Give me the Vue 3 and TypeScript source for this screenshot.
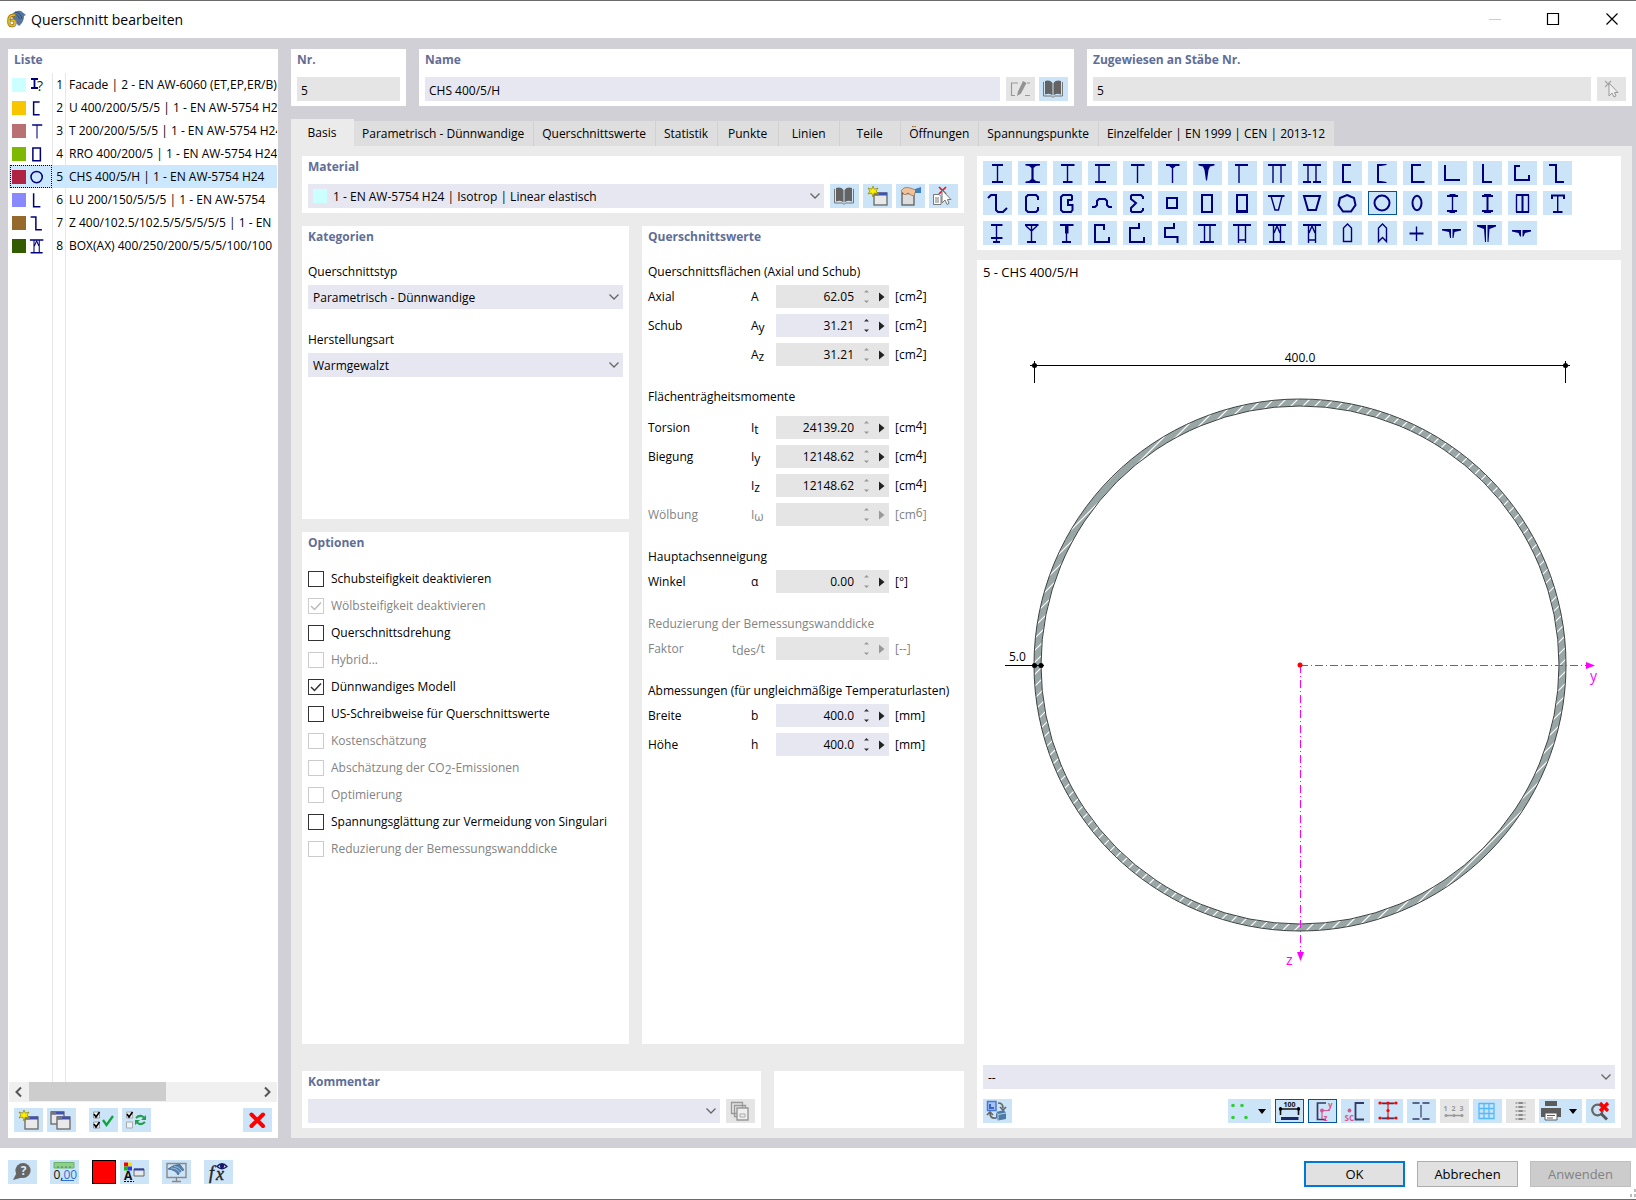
<script setup lang="ts">
import { ref } from 'vue'

interface Shape { name: string; d?: string; t?: string; f?: string }
interface Section { id: number; color: string; shape: number; label: string }
interface Option { label: string; sub?: string; tail?: string; on?: boolean; off?: boolean }
interface Value { name: string; sym: string; sub?: string; rest?: string; value: string; unit: string; pow?: string; edit?: boolean; off?: boolean }
interface Group { title: string; off?: boolean; roomy?: boolean; rows: Value[] }

// d: heavy strokes, t: light strokes, f: filled areas
const shapes: Shape[] = [
  { name: 'I', d: 'M9 4H20M9 21H20', t: 'M14.5 4V21' },
  { name: 'I konisch', t: 'M14.5 4V21', f: 'M7.5 3H22V4.5L18 5L15.500 7V18L18 20L22 20.500V22H7.500V20.500L11 20L13.500 18V7L11 5L7.500 4.500Z' },
  { name: 'I ungleich', d: 'M8 4H21.5M10 21H19.5', t: 'M14.5 4V21' },
  { name: 'I einseitig', d: 'M7 4H22M7 21H18', t: 'M11 4V21' },
  { name: 'T', d: 'M8 4H21.5', t: 'M14.5 4V22' },
  { name: 'T konisch', d: 'M8 4H21.5', t: 'M14.5 4V22', f: 'M10 4H19L15.5 7H13.5Z' },
  { name: 'T spitz', f: 'M5.5 3H21.5V4.5L17 5.500L15.500 9L14 19.500H13L11.500 9L10 5.500L5.500 4.500Z' },
  { name: 'T einseitig', d: 'M7 4H20', t: 'M11 4V22' },
  { name: 'TT', d: 'M5 4H23', t: 'M10 4V22M18 4V22' },
  { name: 'II', d: 'M5 4H23M5 21H13M15 21H23', t: 'M10 4V21M18 4V21' },
  { name: 'U', d: 'M18 4H10V21H18' },
  { name: 'U konisch', d: 'M10 3V22', f: 'M9 3H18.5V4L13 5H10ZM9 22H18.5V21L13 20H10Z' },
  { name: 'U ungleich', d: 'M18 4H9V21H21.5' },
  { name: 'L breit', d: 'M7 4V19H22' },
  { name: 'L', d: 'M10 3V21H19' },
  { name: 'L mit Lippen', d: 'M12 5H7V19H21V14' },
  { name: 'Z', d: 'M6 4H13V21H21' },
  { name: 'Z mit Lippen', d: 'M5 7L8 4H13V19L15 21H20L24 17' },
  { name: 'C', d: 'M20 9V6L18 4H10L8 6V19L10 21H18L20 19V16' },
  { name: 'C versteift', d: 'M19 9V5L18 4H10L8 6V19L10 21H18L19.500 19V14H15V9H19.500' },
  { name: 'Hut', d: 'M4 16H7L9 14V10L11 8H17L19 10V14L21 16H24' },
  { name: 'Sigma', d: 'M20 8V6L18 4H9L8 5V8L13 12L8 17V20L9 21H18L20 19V17' },
  { name: 'Quadratrohr', d: 'M9 7H19V17H9Z' },
  { name: 'Rechteckrohr', d: 'M9 4H19V21H9Z' },
  { name: 'Rechteckrohr verstärkt', d: 'M9 4H19V21H9Z', f: 'M8 19H20V22H8Z' },
  { name: 'Trapez offen', d: 'M5 5H21.500', t: 'M8 5L12 19H15.500L19 5' },
  { name: 'Trapez', d: 'M6 5H22L18 19H10Z' },
  { name: 'Polygon', d: 'M14 4L21 7L22.5 14L18 20.5H10L5.5 14L7 7Z' },
  { name: 'Kreisrohr', d: 'M6.500 12A7.500 7.500 0 1 0 21.500 12A7.500 7.500 0 1 0 6.500 12Z' },
  { name: 'Ellipse', d: 'M9.500 12A4.500 7.200 0 1 0 18.500 12A4.500 7.200 0 1 0 9.500 12Z' },
  { name: 'I mit Kappe', d: 'M9 5H20M9 20H19', t: 'M14.500 5V20', f: 'M11.500 3H17.500V5H11.500ZM11.500 20H17V22H11.500Z' },
  { name: 'I mit Kappen', d: 'M9 5H20M9 20H20M14.500 5V20', f: 'M11 3H18V5H11ZM11 20H18V22H11Z' },
  { name: 'Kasten mit Steg', d: 'M8 4H21M8 21H21M14.500 4V21', t: 'M8.500 4V21M20.500 4V21' },
  { name: 'T mit Lippen', d: 'M9 8V4.500H21V8M10 21H19.500', t: 'M14.700 4V21' },
  { name: 'I mit Zusatz', d: 'M8 4H19.500M8 17H19.500M10 21H17', t: 'M13.500 4V21' },
  { name: 'I mit Streben', d: 'M7 4H20.500M9 21H18', t: 'M13.500 4V21M8 5L13.500 10L19 5' },
  { name: 'I verstärkt', d: 'M7 4H20.500M9 21H18', t: 'M13.500 4V21', f: 'M12 4H15.500V12.500H12Z' },
  { name: 'U mit Lippen', d: 'M16 9V4H7V21H21V16' },
  { name: 'U abgestuft', d: 'M16 2V7H7V21H21V16' },
  { name: 'S', d: 'M16 2V7H7V16H19.500V22' },
  { name: 'Doppelsteg', d: 'M5 4H23M7 21H21', t: 'M11.500 4V21M17 4V21' },
  { name: 'Doppelsteg offen', d: 'M5 4H23', t: 'M10.500 4V22M17.500 4V22M10.500 19H17.500' },
  { name: 'BOX(AX)', d: 'M5 4H23M6 21H22', t: 'M10.500 4V21M17.500 4V21M11 12L14 5L17 12' },
  { name: 'BOX offen', d: 'M5 4H23', t: 'M10.500 4V22M17.500 4V22M11 12L14 5L17 12M10.500 19H17.500' },
  { name: 'Spitzbogen', t: 'M10.500 20.500V7L14.500 3L18.500 7V20.500Z' },
  { name: 'Spitzbogen gekerbt', t: 'M10.500 20.500V7L14.500 3L18.500 7V20.500L14.500 16.500Z' },
  { name: 'Kreuz', d: 'M6.500 12.500H20.500', t: 'M13.500 5.500V20' },
  { name: 'Doppelwinkel', f: 'M4 8H13V17H12L11 11L4 9.500ZM14.500 8H23V9.500L16.500 11L15.500 17H14.500Z' },
  { name: 'Doppelwinkel lang', f: 'M4 4H13V21H12L11 8L4 5.500ZM14.500 4H23V5.500L16.500 8L15.500 21H14.500Z' },
  { name: 'Doppelwinkel kurz', f: 'M4 9H13V15.500H12L10.500 12L4 10.500ZM14.500 9H23V10.500L17 12L15.500 15.500H14.500Z' },
]
const shapeRows: Shape[][] = [shapes.slice(0, 17), shapes.slice(17, 34), shapes.slice(34)]

const sections: Section[] = [
  { id: 1, color: '#ccffff', shape: -1, label: 'Facade | 2 - EN AW-6060 (ET,EP,ER/B)' },
  { id: 2, color: '#f7c600', shape: 10, label: 'U 400/200/5/5/5 | 1 - EN AW-5754 H24' },
  { id: 3, color: '#b97073', shape: 4, label: 'T 200/200/5/5/5 | 1 - EN AW-5754 H24' },
  { id: 4, color: '#7cb900', shape: 23, label: 'RRO 400/200/5 | 1 - EN AW-5754 H24' },
  { id: 5, color: '#b02342', shape: 28, label: 'CHS 400/5/H | 1 - EN AW-5754 H24' },
  { id: 6, color: '#8888ff', shape: 14, label: 'LU 200/150/5/5/5 | 1 - EN AW-5754' },
  { id: 7, color: '#95682b', shape: 16, label: 'Z 400/102.5/102.5/5/5/5/5/5 | 1 - EN' },
  { id: 8, color: '#335c00', shape: 42, label: 'BOX(AX) 400/250/200/5/5/5/100/100' },
]
const current = ref(5)

const tabs = ['Basis', 'Parametrisch - Dünnwandige', 'Querschnittswerte', 'Statistik', 'Punkte', 'Linien', 'Teile', 'Öffnungen', 'Spannungspunkte', 'Einzelfelder | EN 1999 | CEN | 2013-12']
const activeTab = ref(0)

const options = ref<Option[]>([
  { label: 'Schubsteifigkeit deaktivieren' },
  { label: 'Wölbsteifigkeit deaktivieren', on: true, off: true },
  { label: 'Querschnittsdrehung' },
  { label: 'Hybrid...', off: true },
  { label: 'Dünnwandiges Modell', on: true },
  { label: 'US-Schreibweise für Querschnittswerte' },
  { label: 'Kostenschätzung', off: true },
  { label: 'Abschätzung der CO', sub: '2', tail: '-Emissionen', off: true },
  { label: 'Optimierung', off: true },
  { label: 'Spannungsglättung zur Vermeidung von Singularitäten' },
  { label: 'Reduzierung der Bemessungswanddicke', off: true },
])

const groups: Group[] = [
  { title: 'Querschnittsflächen (Axial und Schub)', rows: [
    { name: 'Axial', sym: 'A', value: '62.05', unit: 'cm', pow: '2' },
    { name: 'Schub', sym: 'A', sub: 'y', value: '31.21', unit: 'cm', pow: '2', edit: true },
    { name: '', sym: 'A', sub: 'z', value: '31.21', unit: 'cm', pow: '2' },
  ] },
  { title: 'Flächenträgheitsmomente', roomy: true, rows: [
    { name: 'Torsion', sym: 'I', sub: 't', value: '24139.20', unit: 'cm', pow: '4' },
    { name: 'Biegung', sym: 'I', sub: 'y', value: '12148.62', unit: 'cm', pow: '4' },
    { name: '', sym: 'I', sub: 'z', value: '12148.62', unit: 'cm', pow: '4' },
    { name: 'Wölbung', sym: 'I', sub: 'ω', value: '', unit: 'cm', pow: '6', off: true },
  ] },
  { title: 'Hauptachsenneigung', rows: [{ name: 'Winkel', sym: 'α', value: '0.00', unit: '°' }] },
  { title: 'Reduzierung der Bemessungswanddicke', off: true, rows: [{ name: 'Faktor', sym: 't', sub: 'des', rest: '/t', value: '', unit: '--', off: true }] },
  { title: 'Abmessungen (für ungleichmäßige Temperaturlasten)', rows: [
    { name: 'Breite', sym: 'b', value: '400.0', unit: 'mm', edit: true },
    { name: 'Höhe', sym: 'h', value: '400.0', unit: 'mm', edit: true },
  ] },
]

const win = (x: number, y: number): string =>
  `<rect x="${x}" y="${y}" width="13" height="12" fill="#e9e9ea" stroke="#6e6e6e" stroke-width="1.400"/><path d="M${x} ${y + 1}h13" stroke="#3f51b5" stroke-width="3"/><path d="M${x} ${y + 1}h5" stroke="#777" stroke-width="3"/>`
const star = '<path d="M10 2l1.300 3.200L15 4l-2 3 2 3-3.700-1L10 13l-1.300-4L5 10l2-3-2-3 3.700 1.200z" fill="#ffee00" stroke="#8a7d00" stroke-width=".7"/>'
const icons: Record<string, string> = {
  book: '<path d="M4.500 5V19H12.500L14 20.500L15.500 19H23.500V5" fill="none" stroke="#777" stroke-width="1"/><path d="M6 4Q11 2.500 13.500 6V18.500Q11 15.500 6 17.500Z" fill="#636363"/><path d="M22 4Q17 2.500 14.500 6V18.500Q17 15.500 22 17.500Z" fill="#636363"/>',
  edit: '<path d="M12 6H5.500V18.500H9M19 18.500H24M21 6H24" fill="none" stroke="#999" stroke-width="1.200"/><path d="M11 19L12 14.500L17 4L20.500 6L15 16.500Z" fill="#929292"/>',
  pick: '<path d="M8 4L14 10M14 4L8 10" stroke="#aaa" stroke-width="1.400"/><path d="M12 6V19L15 16L17 20L19 19L17.500 15.500H21Z" fill="#f0f0f0" stroke="#999"/>',
  new: win(11, 9) + star,
  hand: '<path d="M6 9H18V21H6Z" fill="#ddd" stroke="#6e6e6e" stroke-width="1.500"/><path d="M6 9H18" stroke="#555" stroke-width="2.500"/><path d="M5 7Q8 2 14 4L20 6L18 12Q14 11 12 9Q8 12 7 9Z" fill="#efc39a" stroke="#9c7450" stroke-width=".8"/><path d="M19 5L25 3V9L19 9Z" fill="#3f7fc0"/>',
  unpick: '<path d="M10 3L17 10M17 3L10 10" stroke="#ee1122" stroke-width="1.700"/><path d="M4.500 10.500H10L12 12.500V20.500H4.500Z" fill="#fff" stroke="#777"/><path d="M6 14H10M6 16H10M6 18H10" stroke="#777"/><path d="M13 6V19L16 16L18 20.500L20 19.500L18.500 15.500H22Z" fill="#fff" stroke="#777"/>',
  copy: win(4, 4) + win(10, 9),
  checkAll: '<path d="M4.500 4H10.500V10H4.500ZM4.500 14H10.500V20H4.500Z" fill="#fff" stroke="#999"/><path d="M5 6L7 9L10.500 4M5 16L7 19L10.500 14" fill="none" stroke="#000" stroke-width="1.600"/><path d="M14 12L17.500 17L24 8" fill="none" stroke="#12a33e" stroke-width="2.300"/>',
  checkSwap: '<path d="M4.500 4H10.500V10H4.500ZM4.500 14H10.500V20H4.500Z" fill="#fff" fill-opacity=".6" stroke="#aaa"/><path d="M5 6L7 9L10.500 4" fill="none" stroke="#000" stroke-width="1.600"/><path d="M14 10Q18 6 22 9.500M23 14Q19 18 15 14.500" fill="none" stroke="#20a050" stroke-width="2"/><path d="M24 7V12H19ZM13 17V12H18Z" fill="#20a050"/>',
  remove: '<path d="M8.500 6.500L20 18M20 6.500L8.500 18" stroke="#ff0000" stroke-width="4" stroke-linecap="round"/>',
  help: '<circle cx="15" cy="10.500" r="7.600" fill="#666"/><path d="M9 12L5 20L14 17.500Z" fill="#666"/><text x="15.500" y="15" text-anchor="middle" font-size="12" font-weight="700" fill="#dcebf8">?</text>',
  units: '<path d="M4 2.500H24V8H4Z" fill="#8ed08a" stroke="#6bb068"/><path d="M8 6V8M12 6V8M16 6V8M20 6V8" stroke="#4b8a4b"/><text x="3.500" y="18.500" font-size="12" fill="#111">0,<tspan fill="#2f6fd0">00</tspan></text><path d="M12 20.500H24" stroke="#2f6fd0"/>',
  colors: '<path d="M4 2.500H8V6.500H4Z" fill="#f00"/><path d="M8 2.500H12V6.500H8Z" fill="#fd0"/><path d="M4 6.500H8V10.500H4Z" fill="#1b1"/><path d="M8 6.500H12V10.500H8Z" fill="#33f"/><text x="4" y="20" font-size="12" font-weight="700" fill="#111">A</text><path d="M4 21.500H14" stroke="#111" stroke-dasharray="2 1"/><path d="M14 9H24V16H14Z" fill="#e8e8e8" stroke="#666"/><path d="M14 9.500H24" stroke="#2a3fb0" stroke-width="2"/>',
  view: '<path d="M5 3.500H24V17.500H5ZM14.500 17.500V21M10 21.500H19" fill="none" stroke="#888" stroke-width="1.400"/><path d="M6 9Q12 4 18 4.500L22 10L19 11L16 15Q14 10 6 9Z" fill="#5681ad" stroke="#33557a" stroke-width=".6"/><path d="M9 8Q15 8 18 13M12 6Q17 7 20 11" fill="none" stroke="#bcd4ea" stroke-width=".7"/>',
  fx: '<text x="5" y="19" font-size="18" font-style="italic" font-family="Liberation Serif" fill="#222" stroke="#222" stroke-width=".4">f</text><text x="12" y="20" font-size="18" font-style="italic" font-family="Liberation Serif" fill="#222" stroke="#222" stroke-width=".4">x</text><path d="M13 6.500Q18 1 23 6.500Q18 11 13 6.500Z" fill="#dfe9f8" stroke="#15156a" stroke-width="1.300"/><circle cx="18" cy="6" r="2.200" fill="#15156a"/>',
  layers: '<path d="M5.500 3.500H16.500V14.500H5.500ZM8.500 6.500H19.500V17.500H8.500Z" fill="none" stroke="#999" stroke-width="1.300"/><path d="M11 9H22V21H11Z" fill="#eee" stroke="#999" stroke-width="1.400"/><path d="M14 15H19V18H14Z" fill="none" stroke="#aaa"/>',
  convert: '<path d="M4.500 2.500H13V11.500H4.500Z" fill="#a9c2f4" stroke="#4a78d8" stroke-width="1.500"/><path d="M7 5V9H11" fill="none" stroke="#3a62c8" stroke-width="2"/><path d="M15 4Q20 4 20 9M17 8L20 11L23 8M13 19Q7 20 7 14M4 16L7 13L10 16" fill="none" stroke="#666" stroke-width="1.700"/><path d="M13 13L21 11L23 14V20L15 21.500L13 19Z" fill="#4c7ba8"/><path d="M13 13L15 15.500V21.500M15 15.500L23 14" stroke="#b8d2ea" fill="none"/>',
  points: '<g fill="#2fd02f"><circle cx="5" cy="6.500" r="1.800"/><circle cx="14" cy="6.500" r="1.800"/><circle cx="5" cy="18.500" r="1.800"/><circle cx="18" cy="18.500" r="1.800"/></g><path d="M30 10H38L34 15Z" fill="#000"/>',
  dims: '<text x="14.500" y="8" text-anchor="middle" font-size="7" font-weight="700" fill="#111">100</text><path d="M5.500 10H23.500M5.500 8V16M23.500 8V16" stroke="#111" stroke-width="1.600"/><circle cx="5.500" cy="10" r="1.700"/><circle cx="23.500" cy="10" r="1.700"/><path d="M6 19.500H23.500" stroke="#1b2a66" stroke-width="3"/>',
  axes: '<path d="M18 4H9.500V20.500H18" fill="none" stroke="#333a66" stroke-width="1.700"/><path d="M14 11.500H22M14 11.500V20" stroke="#d9558f" stroke-width="1.200"/><circle cx="14" cy="11.500" r="2" fill="#d9558f"/><text x="20" y="9" font-size="8" font-weight="700" fill="#d9558f">y</text><text x="15.500" y="22" font-size="8" font-weight="700" fill="#d9558f">z</text>',
  shear: '<path d="M23 4H14.500V20.500H23" fill="none" stroke="#333a66" stroke-width="1.800"/><circle cx="8.500" cy="11.500" r="1.900" fill="#d9558f"/><text x="3.500" y="22" font-size="8" font-weight="700" fill="#d9558f">SC</text>',
  nodes: '<path d="M6 4H22M6 19H22M14 4V19" stroke="#d22" stroke-width="1.200"/><path d="M8 4.500H20M8 19.500H20" stroke="#333a66" stroke-width="1.500"/><g fill="#f00"><circle cx="6" cy="4" r="1.600"/><circle cx="14" cy="4" r="1.600"/><circle cx="22" cy="4" r="1.600"/><circle cx="14" cy="11.500" r="1.600"/><circle cx="6" cy="19" r="1.600"/><circle cx="14" cy="19" r="1.600"/><circle cx="22" cy="19" r="1.600"/></g>',
  lines: '<path d="M5.500 4H12.500M15.500 4H22.500M5.500 20H12.500M15.500 20H22.500" stroke="#333a66" stroke-width="1.700"/><path d="M14 6V18.500" stroke="#556088" stroke-width="1.500"/>',
  numbers: '<text x="3.500" y="12" font-size="7" font-weight="700" fill="#999">1</text><text x="11.500" y="12" font-size="7" font-weight="700" fill="#999">2</text><text x="19.500" y="12" font-size="7" font-weight="700" fill="#999">3</text><path d="M6 16.500H22" stroke="#999" stroke-width="1.500"/><circle cx="6" cy="16.500" r="1.500" fill="#999"/><circle cx="14" cy="16.500" r="1.500" fill="#999"/><circle cx="22" cy="16.500" r="1.500" fill="#999"/>',
  grid: '<path d="M6 4.500H21V19.500H6ZM6 9.500H21M6 14.500H21M11 4.500V19.500M16 4.500V19.500" fill="none" stroke="#51b9ff" stroke-width="1.300"/>',
  mesh: '<path d="M9.500 4H19.500M9.500 8H19.500M9.500 12H19.500M9.500 16H19.500M9.500 20H19.500" stroke="#aaa" stroke-width="2" stroke-dasharray="2 1"/><path d="M14.500 3V21" stroke="#888" stroke-width="4" stroke-dasharray="2 2"/>',
  print: '<path d="M6 2H18V7H6Z" fill="#5c5c5c"/><path d="M2 9H22V18H2Z" fill="#5c5c5c"/><path d="M6 14H18V21H6Z" fill="#fff" stroke="#5c5c5c"/><path d="M8 16.500H16M8 19H14" stroke="#5c5c5c"/><path d="M30 10H38L34 15Z" fill="#000"/>',
  zoomOff: '<circle cx="11.500" cy="11" r="5.300" fill="none" stroke="#666" stroke-width="2.200"/><path d="M15 14.500L21 20.500" stroke="#555" stroke-width="3"/><path d="M14 4L22 12M22 4L14 12" stroke="#f00" stroke-width="3.200"/>',
}

const listTools = [
  { icon: 'new', title: 'Neu' }, { icon: 'copy', title: 'Kopieren' },
  { icon: 'checkAll', title: 'Alle auswählen', gap: true }, { icon: 'checkSwap', title: 'Auswahl umkehren' },
]
const viewTools = [
  { icon: 'points', wide: true }, { icon: 'dims', active: true }, { icon: 'axes', active: true }, { icon: 'shear' },
  { icon: 'nodes' }, { icon: 'lines' }, { icon: 'numbers', off: true }, { icon: 'grid' }, { icon: 'mesh', off: true },
  { icon: 'print', wide: true }, { icon: 'zoomOff' },
]
const hatch = Array.from({ length: 120 }, (_, i) => `M${-560 + i * 12} 780l780 -780`).join('')
</script>

<template>
  <div class="window">
    <header class="titlebar">
      <svg class="logo" viewBox="0 0 20 20" aria-hidden="true">
        <path d="M5 5Q10 0 15 1L20 5L18 6Q18 12 13 16L9 12Z" fill="#56789f" />
        <path d="M6 5Q11 3 14 9M9 2Q15 3 16 9" fill="none" stroke="#2f4c70" />
        <text x="1" y="17" font-size="17" font-weight="700" fill="#f2c31c" stroke="#8b6d10" stroke-width="0.700">6</text>
      </svg>
      <h1>Querschnitt bearbeiten</h1>
      <div class="controls">
        <button type="button" aria-label="Minimieren" disabled><svg viewBox="0 0 14 14"><path d="M1 7.500H13" stroke="#ccc" /></svg></button>
        <button type="button" aria-label="Maximieren"><svg viewBox="0 0 14 14"><path d="M1.500 1.500H12.500V12.500H1.500Z" fill="none" stroke="#000" stroke-width="1.200" /></svg></button>
        <button type="button" aria-label="Schließen"><svg viewBox="0 0 14 14"><path d="M1.500 1.500L12.500 12.500M12.500 1.500L1.500 12.500" stroke="#000" stroke-width="1.200" /></svg></button>
      </div>
    </header>

    <main class="body">
      <aside class="list">
        <h2>Liste</h2>
        <div class="rows">
          <table>
            <colgroup><col class="c-icon"><col class="c-no"><col></colgroup>
            <tbody>
              <tr v-for="s in sections" :key="s.id" :class="{ selected: s.id === current }" @click="current = s.id">
                <td class="mark">
                  <div>
                    <i class="swatch" :style="{ background: s.color }"></i>
                    <svg v-if="s.shape < 0" class="mini" viewBox="0 0 22 18">
                      <path d="M5 3H12M5 12H12M8.500 3V12" stroke="#00007d" stroke-width="1.800" />
                      <text x="11" y="15" font-size="14" fill="#222">?</text>
                    </svg>
                    <svg v-else class="mini shape" viewBox="0 0 29 24">
                      <path class="d" :d="shapes[s.shape].d" /><path class="t" :d="shapes[s.shape].t" />
                    </svg>
                  </div>
                </td>
                <td class="no">{{ s.id }}</td>
                <td class="label">{{ s.label }}</td>
              </tr>
            </tbody>
          </table>
        </div>
        <div class="scroll">
          <button type="button" aria-label="Nach links"><svg viewBox="0 0 20 20"><path d="M12 5.500L7.500 10L12 14.500" /></svg></button>
          <div class="track"><div class="thumb"></div></div>
          <button type="button" aria-label="Nach rechts"><svg viewBox="0 0 20 20"><path d="M8 5.500L12.500 10L8 14.500" /></svg></button>
        </div>
        <div class="tools">
          <button v-for="t in listTools" :key="t.icon" type="button" class="ib" :class="{ apart: t.gap }" :aria-label="t.title"><svg viewBox="0 0 29 24" v-html="icons[t.icon]"></svg></button>
          <button type="button" class="ib last" aria-label="Löschen"><svg viewBox="0 0 29 24" v-html="icons.remove"></svg></button>
        </div>
      </aside>

      <div class="content">
        <div class="top">
          <section class="panel">
            <h2><label for="nr">Nr.</label></h2>
            <input id="nr" class="field ro" value="5" readonly>
          </section>
          <section class="panel">
            <h2><label for="name">Name</label></h2>
            <div class="line">
              <input id="name" class="field" value="CHS 400/5/H">
              <button type="button" class="ib off first" disabled aria-label="Name bearbeiten"><svg viewBox="0 0 29 24" v-html="icons.edit"></svg></button>
              <button type="button" class="ib" aria-label="Bibliothek"><svg viewBox="0 0 29 24" v-html="icons.book"></svg></button>
            </div>
          </section>
          <section class="panel">
            <h2><label for="assigned">Zugewiesen an Stäbe Nr.</label></h2>
            <div class="line">
              <input id="assigned" class="field ro" value="5" readonly>
              <button type="button" class="ib off first" disabled aria-label="Stäbe wählen"><svg viewBox="0 0 29 24" v-html="icons.pick"></svg></button>
            </div>
          </section>
        </div>

        <nav class="tabs" role="tablist">
          <button v-for="(t, i) in tabs" :key="t" type="button" role="tab" :aria-selected="i === activeTab" :class="{ active: i === activeTab }" @click="activeTab = i">{{ t }}</button>
        </nav>

        <div class="page">
          <div class="left">
            <section class="panel">
              <h2><label for="material">Material</label></h2>
              <div class="line">
                <div class="combo material">
                  <i class="swatch cyan"></i>
                  <select id="material"><option>1 - EN AW-5754 H24 | Isotrop | Linear elastisch</option></select>
                  <svg class="chev" viewBox="0 0 12 8"><path d="M1.500 1.500L6 6L10.500 1.500" /></svg>
                </div>
                <button type="button" class="ib first" aria-label="Bibliothek"><svg viewBox="0 0 29 24" v-html="icons.book"></svg></button>
                <button type="button" class="ib" aria-label="Neu"><svg viewBox="0 0 29 24" v-html="icons.new"></svg></button>
                <button type="button" class="ib" aria-label="Bearbeiten"><svg viewBox="0 0 29 24" v-html="icons.hand"></svg></button>
                <button type="button" class="ib" aria-label="Auswahl"><svg viewBox="0 0 29 24" v-html="icons.unpick"></svg></button>
              </div>
            </section>

            <div class="middle">
              <div class="stack">
                <section class="panel categories">
                  <h2>Kategorien</h2>
                  <label class="caption" for="type">Querschnittstyp</label>
                  <div class="combo">
                    <select id="type"><option>Parametrisch - Dünnwandige</option></select>
                    <svg class="chev" viewBox="0 0 12 8"><path d="M1.500 1.500L6 6L10.500 1.500" /></svg>
                  </div>
                  <label class="caption second" for="make">Herstellungsart</label>
                  <div class="combo">
                    <select id="make"><option>Warmgewalzt</option></select>
                    <svg class="chev" viewBox="0 0 12 8"><path d="M1.500 1.500L6 6L10.500 1.500" /></svg>
                  </div>
                </section>
                <section class="panel options">
                  <h2>Optionen</h2>
                  <ul>
                    <li v-for="o in options" :key="o.label">
                      <label :class="{ dim: o.off }">
                        <input v-model="o.on" type="checkbox" :disabled="o.off">
                        <svg v-if="o.on" class="tick" viewBox="0 0 16 16"><path d="M3 8L6.500 11.500L13 4.500" /></svg>
                        <span>{{ o.label }}<span v-if="o.sub" class="sub">{{ o.sub }}</span>{{ o.tail }}</span>
                      </label>
                    </li>
                  </ul>
                </section>
              </div>

              <section class="panel values">
                <h2>Querschnittswerte</h2>
                <div v-for="(g, gi) in groups" :key="g.title" class="group" :class="{ roomy: g.roomy }">
                  <h3 :class="{ dim: g.off }">{{ g.title }}</h3>
                  <div v-for="(r, ri) in g.rows" :key="ri" class="row" :class="{ dim: r.off }">
                    <label :for="`v${gi}-${ri}`"><span class="rn">{{ r.name }}</span><span class="sym" :class="{ long: r.rest }">{{ r.sym }}<span v-if="r.sub" class="sub">{{ r.sub }}</span>{{ r.rest }}</span></label>
                    <div class="num" :class="{ edit: r.edit }">
                      <input :id="`v${gi}-${ri}`" type="text" :value="r.value" :readonly="!r.edit" :disabled="r.off">
                      <button type="button" class="spin" aria-label="Wert ändern" :disabled="!r.edit"><svg viewBox="0 0 9 17"><path d="M2 4.500L4.500 2L7 4.500ZM2 12.500L4.500 15L7 12.500Z" /></svg></button>
                      <button type="button" class="more" aria-label="Weitere Werte" :disabled="r.off"><svg viewBox="0 0 7 10"><path d="M1 0.500L6.500 5L1 9.500Z" /></svg></button>
                    </div>
                    <span class="unit">[{{ r.unit }}<span v-if="r.pow" class="sup">{{ r.pow }}</span>]</span>
                  </div>
                </div>
              </section>
            </div>

            <div class="bottom">
              <section class="panel">
                <h2><label for="comment">Kommentar</label></h2>
                <div class="line">
                  <div class="combo">
                    <select id="comment"><option></option></select>
                    <svg class="chev" viewBox="0 0 12 8"><path d="M1.500 1.500L6 6L10.500 1.500" /></svg>
                  </div>
                  <button type="button" class="ib off first" disabled aria-label="Kommentare"><svg viewBox="0 0 29 24" v-html="icons.layers"></svg></button>
                </div>
              </section>
              <section class="panel"></section>
            </div>
          </div>

          <div class="right">
            <section class="palette">
              <div v-for="(row, ri) in shapeRows" :key="ri" class="prow">
                <button v-for="s in row" :key="s.name" type="button" class="ib" :class="{ active: s.name === 'Kreisrohr' }" :aria-label="s.name">
                  <svg class="shape" viewBox="0 0 29 24"><path class="d" :d="s.d" /><path class="t" :d="s.t" /><path class="f" :d="s.f" /></svg>
                </button>
              </div>
            </section>

            <section class="preview">
              <h3>5 - CHS 400/5/H</h3>
              <div class="canvas">
                <svg viewBox="0 0 644 774" role="img" aria-label="Kreisrohr 400 × 5 mm">
                  <defs>
                    <clipPath id="wall"><path clip-rule="evenodd" d="M57 381a266 266 0 1 0 532 0a266 266 0 1 0 -532 0ZM64 381a259 259 0 1 0 518 0a259 259 0 1 0 -518 0Z" /></clipPath>
                  </defs>
                  <circle cx="323" cy="381" r="262.500" fill="none" stroke="#98a6a5" stroke-width="7" />
                  <path :d="hatch" clip-path="url(#wall)" stroke="#fff" stroke-width="1.200" />
                  <g fill="none" stroke="#3e4242" stroke-width="1"><circle cx="323" cy="381" r="266" /><circle cx="323" cy="381" r="259" /></g>
                  <path d="M53 81.500H593M57.500 77V99M588.500 77V99M28 381.500H67" stroke="#000" />
                  <circle cx="57.500" cy="81.500" r="2.500" /><circle cx="588.500" cy="81.500" r="2.500" />
                  <circle cx="57.500" cy="381.500" r="2.500" /><circle cx="64" cy="381.500" r="2.500" />
                  <text x="323" y="78" text-anchor="middle">400.0</text>
                  <text x="32" y="377">5.0</text>
                  <g stroke="#ff00ff" stroke-dasharray="8 3 1 3"><path d="M323 381.500H610" /><path d="M323.500 381V669" /></g>
                  <path d="M609 378V385L618 381.500ZM320 668H327L323.500 677Z" fill="#ff00ff" />
                  <circle cx="323" cy="381" r="2.500" fill="#ff0000" />
                  <text class="axis" x="613" y="397">y</text>
                  <text class="axis" x="309" y="681">z</text>
                </svg>
              </div>
              <div class="combo">
                <select aria-label="Darstellung"><option>--</option></select>
                <svg class="chev" viewBox="0 0 12 8"><path d="M1.500 1.500L6 6L10.500 1.500" /></svg>
              </div>
              <div class="tools view">
                <button type="button" class="ib" aria-label="Exportieren"><svg viewBox="0 0 29 24" v-html="icons.convert"></svg></button>
                <span class="grow"></span>
                <button v-for="t in viewTools" :key="t.icon" type="button" class="ib" :class="{ wide: t.wide, active: t.active, off: t.off }" :disabled="t.off" :aria-label="t.icon"><svg :viewBox="t.wide ? '0 0 43 24' : '0 0 29 24'" v-html="icons[t.icon]"></svg></button>
              </div>
            </section>
          </div>
        </div>
      </div>
    </main>

    <footer class="footer">
      <button type="button" class="ib" aria-label="Hilfe"><svg viewBox="0 0 29 24" v-html="icons.help"></svg></button>
      <button type="button" class="ib" aria-label="Einheiten"><svg viewBox="0 0 29 24" v-html="icons.units"></svg></button>
      <div class="pair">
        <button type="button" class="color" aria-label="Farbe"></button>
        <button type="button" class="ib" aria-label="Farben bearbeiten"><svg viewBox="0 0 29 24" v-html="icons.colors"></svg></button>
      </div>
      <button type="button" class="ib" aria-label="Ansicht"><svg viewBox="0 0 29 24" v-html="icons.view"></svg></button>
      <button type="button" class="ib" aria-label="Formel"><svg viewBox="0 0 29 24" v-html="icons.fx"></svg></button>
      <span class="grow"></span>
      <div class="actions">
        <button type="button" class="ok">OK</button>
        <button type="button">Abbrechen</button>
        <button type="button" disabled>Anwenden</button>
      </div>
      <svg class="grip" viewBox="0 0 6 8" aria-hidden="true"><path d="M4 0H6V3H4ZM0 5H2V8H0ZM4 5H6V8H4Z" /></svg>
    </footer>
  </div>
</template>

<style>
body { margin: 0; }
</style>

<style scoped>
.window { min-height: 100vh; display: flex; flex-direction: column; box-sizing: border-box; border-top: 1px solid #6b6b6b; border-bottom: 1px solid #6b6b6b; background: #fff; color: #000; font: 12px/18px "Open Sans", "Noto Sans", sans-serif; }
.window *, .window *::before { box-sizing: border-box; }
button, input, select { font: inherit; color: inherit; border: 0; border-radius: 0; margin: 0; padding: 0; background: none; outline: none; appearance: none; min-width: 0; }
select, input { opacity: 1; }
h1, h2, h3, ul { margin: 0; padding: 0; font: inherit; list-style: none; }
h2 { height: 20px; line-height: 20px; font-weight: 700; color: #5f6e97; margin-bottom: 7px; }
svg { display: block; }

.titlebar { height: 37px; display: flex; align-items: center; padding-left: 6px; }
.logo { width: 20px; height: 20px; margin-right: 5px; }
.titlebar h1 { font-size: 14px; line-height: 20px; flex: 1; }
.controls { display: flex; height: 100%; }
.controls button { width: 58px; height: 36px; display: grid; place-items: center; }
.controls button:last-child { width: 48px; margin-left: 6px; }
.controls svg { width: 14px; height: 14px; }

.body { flex: 1; display: flex; gap: 13px; padding: 11px 4px 10px 8px; background: #d1d0d6; }
.list { width: 270px; flex: none; background: #fff; padding: 1px; display: flex; flex-direction: column; }
.list h2 { padding-left: 5px; margin-bottom: 3px; }
.rows { flex: 1; background: linear-gradient(#e8e8ea, #e8e8ea) 43px 0 / 1px 100% no-repeat, linear-gradient(#e8e8ea, #e8e8ea) 56px 0 / 1px 100% no-repeat; }
table { width: 100%; table-layout: fixed; border-collapse: collapse; }
.c-icon { width: 44px; }
.c-no { width: 13px; }
td { height: 23px; padding: 0; white-space: nowrap; overflow: hidden; }
.no { text-align: right; padding-right: 3px; }
.label { padding-left: 3px; }
.selected td { background: #cce8ff; }
.mark div { height: 23px; display: flex; align-items: center; padding-left: 2px; width: 42px; margin-left: 1px; }
.selected .mark div { border: 1px dotted #000; padding-left: 1px; }
.swatch { width: 14px; height: 14px; flex: none; }
.mini { width: 22px; height: 18px; flex: none; }
.shape .d, .shape .t { fill: none; stroke: #00007d; stroke-width: 2; }
.shape .t { stroke-width: 1.4; }
.shape .f { fill: #00007d; }
.scroll { display: flex; height: 20px; background: #f0f0f0; }
.scroll button { width: 20px; }
.scroll path { fill: none; stroke: #555; stroke-width: 2; }
.track { flex: 1; height: 20px; }
.thumb { width: 60%; height: 19px; background: #cdcdcd; }
.tools { display: flex; gap: 4px; padding: 6px 5px 5px; }
.tools .apart { margin-left: 9px; }
.tools .last { margin-left: auto; }

.ib { width: 29px; height: 24px; flex: none; background: #cce4f7; }
.ib svg { width: 100%; height: 24px; }
.ib.off { background: #e5e5e5; }
.ib.active { box-shadow: inset 0 0 0 1px #00559b; }
.ib.wide { width: 43px; }

.content { flex: 1; min-width: 0; display: flex; flex-direction: column; }
.panel { background: #fff; padding: 1px 6px 5px; min-width: 0; }
.top { display: grid; grid-template-columns: 115px minmax(0, 655fr) minmax(0, 545fr); gap: 13px; height: 57px; }
.line { display: flex; gap: 4px; }
.line .first { margin-left: 2px; }
.field { display: block; width: 100%; height: 24px; padding: 2px 4px 0; background: #e7e7f2; }
.field.ro { background: #e5e5e5; }

.tabs { display: flex; align-items: flex-end; height: 27px; margin-top: 13px; }
.tabs button { height: 25px; min-width: 61px; padding: 1px 9px 0 8px; background: #dedede; border-right: 1px solid #d1d0d2; }
.tabs button.active { height: 27px; min-width: 63px; background: #ebebeb; border: 0; }

.page { flex: 1; display: grid; grid-template-columns: minmax(0, 662fr) minmax(0, 644fr); gap: 13px; padding: 10px 11px; background: #ebebeb; }
.left { min-width: 0; display: flex; flex-direction: column; }
.right { min-width: 0; display: flex; flex-direction: column; gap: 10px; }
.combo { display: grid; flex: 1; min-width: 0; height: 24px; background: #e7e7f2; align-items: center; }
.combo > * { grid-row: 1; grid-column: 1; }
.combo select { width: 100%; height: 24px; padding: 1px 24px 0 5px; }
.combo.material select { padding-left: 25px; }
.combo .swatch { margin-left: 5px; }
.cyan { background: #ccffff; }
.chev { width: 12px; height: 8px; justify-self: end; margin-right: 3px; pointer-events: none; }
.chev path { fill: none; stroke: #666; stroke-width: 1.300; }
.middle { flex: 1; display: grid; grid-template-columns: minmax(0, 327fr) minmax(0, 322fr); gap: 13px; margin-top: 13px; }
.stack { display: grid; grid-template-rows: 293fr 512fr; gap: 13px; }
.caption { display: block; margin: 16px 0 4px; }
.caption.second { margin-top: 22px; }
.categories h2, .values h2 { margin-bottom: 16px; }
.options h2 { margin-bottom: 12px; }
.options label { display: grid; grid-template-columns: 16px 1fr; column-gap: 7px; height: 27px; align-items: center; padding-right: 16px; }
.options input { width: 16px; height: 16px; border: 1px solid #333; grid-row: 1; grid-column: 1; }
.options .dim input { border-color: #ccc; }
.tick { width: 16px; height: 16px; grid-row: 1; grid-column: 1; pointer-events: none; }
.tick path { fill: none; stroke: #333; stroke-width: 1.500; }
.dim .tick path { stroke: #bbb; }
.options label > span { white-space: nowrap; overflow: hidden; padding-top: 1px; }
.dim { color: #838383; }
.sub, .sup { font-size: 12px; line-height: 12px; position: relative; top: 2px; }
.sup { top: -2px; }

h3 { white-space: nowrap; }
.group { display: flex; flex-direction: column; gap: 6px; margin-bottom: 22px; }
.group h3 { margin-bottom: -2px; }
.group.roomy h3 { margin-bottom: 4px; }
.row { display: flex; height: 23px; align-items: center; }
.row label { display: flex; width: 128px; flex: none; }
.rn { width: 84px; }
.sym { margin-left: 19px; }
.sym.long { margin-left: 0; }
.num { display: flex; width: 113px; height: 23px; flex: none; background: #e5e5e5; align-items: center; }
.num.edit { background: #e7e7f2; }
.num input { flex: 1; height: 23px; text-align: right; }
.spin { width: 9px; height: 17px; margin: 0 7px 0 8px; }
.spin path { fill: #333; }
.spin:disabled path { fill: #999; }
.more { width: 7px; height: 10px; margin-right: 4px; }
.more path { fill: #222; }
.more:disabled path { fill: #999; }
.unit { margin-left: 6px; }
.bottom { display: grid; grid-template-columns: minmax(0, 459fr) minmax(0, 190fr); gap: 13px; height: 57px; margin-top: 27px; }

.palette { background: #fff; padding: 5px 6px; display: flex; flex-direction: column; gap: 6px; height: 94px; }
.prow { display: flex; gap: 6px; }
.preview { flex: 1; background: #fff; display: flex; flex-direction: column; }
.preview h3 { padding: 3px 6px; font-size: 13px; }
.canvas { flex: 1; min-height: 0; }
.canvas svg { width: 100%; height: auto; }
.canvas text { font-size: 12px; }
.canvas .axis { font-size: 14px; fill: #ff00ff; }
.preview .combo { flex: none; margin: 0 6px; }
.tools.view { padding: 10px 6px 5px; }
.grow { flex: 1; }

.footer { height: 51px; display: flex; align-items: center; gap: 13px; padding: 0 5px 3px 8px; position: relative; }
.pair { display: flex; gap: 4px; }
.color { width: 24px; height: 24px; background: #ff0000; border: 1px solid #000; }
.actions { display: flex; gap: 12px; padding-top: 3px; }
.actions button { width: 101px; height: 26px; background: #e1e1e1; border: 1px solid #adadad; font-size: 13px; }
.actions .ok { border: 2px solid #0078d7; }
.actions button:disabled { background: #ccc; border-color: #bfbfbf; color: #838383; }
.grip { position: absolute; right: 0; bottom: 2px; width: 6px; height: 8px; fill: #bbb; }
</style>
